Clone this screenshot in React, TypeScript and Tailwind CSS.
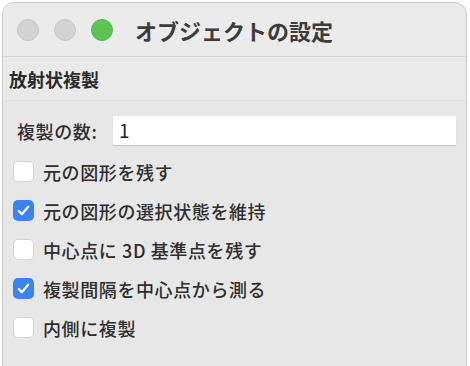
import React from 'react';

const font = { fontFamily: '"Noto Sans CJK JP", "Noto Sans", sans-serif' };

type Opt = { label: string; checked: boolean };

const options: Opt[] = [
  { label: '元の図形を残す', checked: false },
  { label: '元の図形の選択状態を維持', checked: true },
  { label: '中心点に 3D 基準点を残す', checked: false },
  { label: '複製間隔を中心点から測る', checked: true },
  { label: '内側に複製', checked: false },
];

const CheckBox: React.FC<{ checked: boolean }> = ({ checked }) =>
  checked ? (
    <div className="w-[21px] h-[21px] rounded-[5px] bg-[#3d83f0] flex items-center justify-center shrink-0">
      <svg width="15" height="15" viewBox="0 0 16 16" fill="none">
        <path d="M3 8.5l3.2 3.4L13 4" stroke="white" strokeWidth="2.4" strokeLinecap="round" strokeLinejoin="round" />
      </svg>
    </div>
  ) : (
    <div className="w-[21px] h-[21px] rounded-[5px] bg-white border border-[#d4d4d4] shrink-0" />
  );

export default function App() {
  return (
    <div className="w-[470px] h-[366px] bg-white overflow-hidden pl-[2px] pt-[2px]" style={font}>
      <div className="w-[465px] h-[366px] rounded-t-[13px] border border-b-0 border-[#c9c9c9] bg-[#e7e7e7] flex flex-col overflow-hidden">
        {/* Title bar */}
        <div className="h-[54px] bg-[#ebebeb] border-b border-[#d2d2d2] flex items-center pl-[14px] shrink-0">
          <div className="flex gap-[15px]">
            <div className="w-[22px] h-[22px] rounded-full bg-[#d3d3d3] border border-[#c6c6c6]" />
            <div className="w-[22px] h-[22px] rounded-full bg-[#d3d3d3] border border-[#c6c6c6]" />
            <div className="w-[22px] h-[22px] rounded-full bg-[#5ec453] border border-[#54b74a]" />
          </div>
          <div className="ml-[22px] text-[22px] font-bold text-[#3c3c3c] leading-none">オブジェクトの設定</div>
        </div>

        {/* Section header */}
        <div className="h-[44px] bg-[#eaeaea] border-b border-[#dedede] flex items-center pl-[6px] shrink-0">
          <span className="text-[18px] font-bold text-[#2a2a2a] leading-none">放射状複製</span>
        </div>

        {/* Body */}
        <div className="flex flex-col pt-[15px]">
          <div className="flex items-center pl-[14px] pr-[10px]">
            <span className="text-[18px] font-medium tracking-[0.6px] text-[#2e2e2e] w-[96px] leading-none">複製の数:</span>
            <div className="flex-1 h-[29px] bg-white shadow-[0_1px_1px_rgba(0,0,0,0.12)] flex items-center pl-[6px] text-[19px] text-[#222]">
              1
            </div>
          </div>
          <div className="flex flex-col gap-[18px] pt-[16px] pl-[10px]">
            {options.map((o) => (
              <div key={o.label} className="flex items-center gap-[9px] h-[21px]">
                <CheckBox checked={o.checked} />
                <span className="text-[18px] font-medium tracking-[0.6px] text-[#2e2e2e] leading-none">{o.label}</span>
              </div>
            ))}
          </div>
        </div>
      </div>
    </div>
  );
}
